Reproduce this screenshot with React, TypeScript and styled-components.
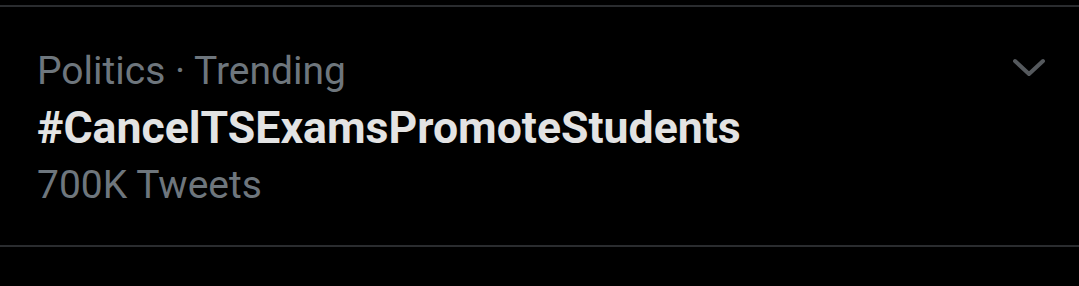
import styled, { createGlobalStyle } from "styled-components"

const Global = createGlobalStyle`
  body {
    margin: 0;
    background: #000;
    font-family: Roboto, "Noto Sans", sans-serif;
  }
`

export default function App() {
  return (
    <>
      <Global />
      <Page>
        <Trend>
          <Info>
            <Meta>Politics · Trending</Meta>
            <Tag>#CancelTSExamsPromoteStudents</Tag>
            <Meta>700K Tweets</Meta>
          </Info>
          <More aria-label="more">
            <svg width="34" height="22" viewBox="0 0 34 22">
              <path d="M3 4 L17 17 L31 4" fill="none" stroke="#55595d" strokeWidth="4" strokeLinecap="round" strokeLinejoin="round" />
            </svg>
          </More>
        </Trend>
      </Page>
    </>
  )
}

const Page = styled.div`
  width: 1079px;
  height: 286px;
  padding-top: 5px;
  box-sizing: border-box;
  background: #000;
`

const Trend = styled.div`
  display: flex;
  justify-content: space-between;
  align-items: flex-start;
  border-top: 2px solid #2a2c2f;
  border-bottom: 2px solid #2a2c2f;
  padding: 39px 33px 35px 37px;
`

const Info = styled.div`
  display: flex;
  flex-direction: column;
`

const Meta = styled.span`
  color: #6e767d;
  font-size: 39px;
  line-height: 50px;
`

const Tag = styled.span`
  color: #e3e3e3;
  font-size: 44.6px;
  font-weight: 700;
  line-height: 64px;
`

const More = styled.div`
  display: flex;
  margin-top: 11px;
`
